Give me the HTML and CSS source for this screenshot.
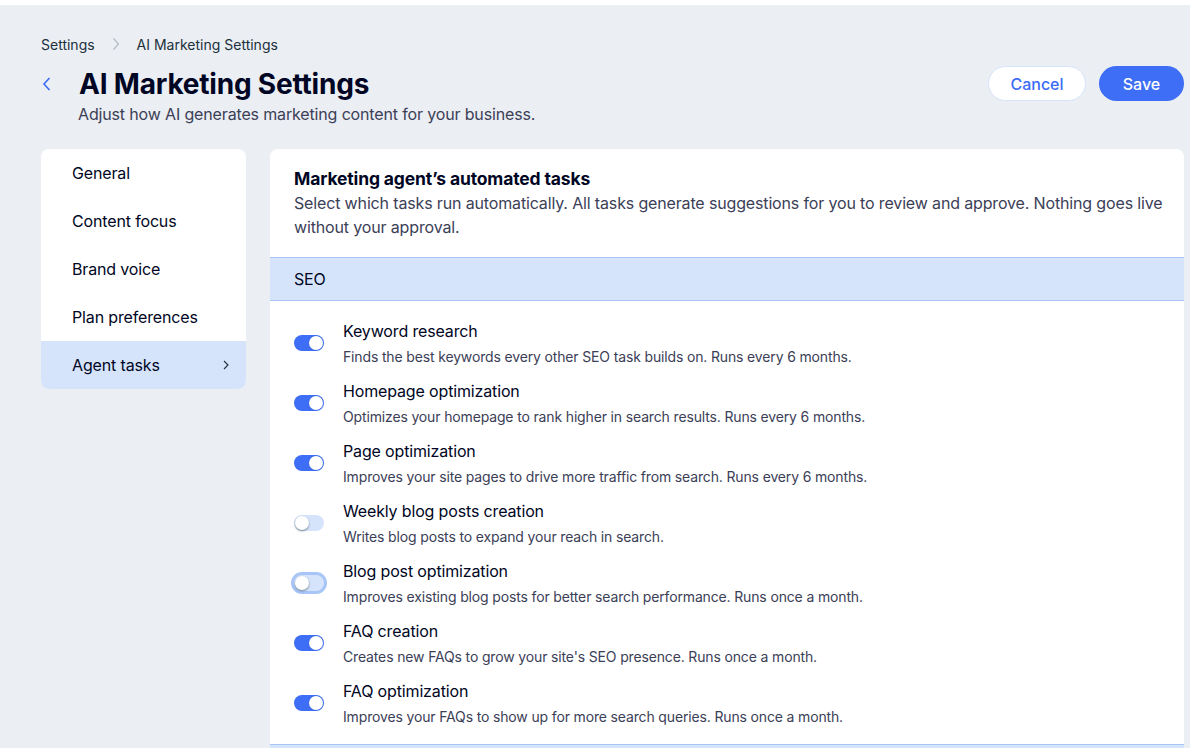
FILE: index.html
```html
<!DOCTYPE html>
<html lang="en">
<head>
  <meta charset="UTF-8">
  <meta name="viewport" content="width=device-width, initial-scale=1.0">
  <title>AI Marketing Settings</title>
  <link rel="stylesheet" href="styles.css">
</head>
<body>
  <div class="topstrip"></div>
  <div class="page">
    <div class="breadcrumb">
      <span>Settings</span>
      <svg class="crumb-sep" width="8" height="14" viewBox="0 0 8 14"><path d="M1.5 1.5 L6.5 7 L1.5 12.5" fill="none" stroke="#b6bac6" stroke-width="1.2"/></svg>
      <span>AI Marketing Settings</span>
    </div>

    <div class="header">
      <div class="title-block">
        <div class="title-row">
          <svg class="back" width="10" height="16" viewBox="0 0 10 16"><path d="M7.5 2 L2 8 L7.5 14" fill="none" stroke="#3b6cf6" stroke-width="1.6"/></svg>
          <h1>AI Marketing Settings</h1>
        </div>
        <p class="subtitle">Adjust how AI generates marketing content for your business.</p>
      </div>
      <div class="actions">
        <button class="btn btn-secondary">Cancel</button>
        <button class="btn btn-primary">Save</button>
      </div>
    </div>

    <div class="layout">
      <nav class="sidebar">
        <div class="nav-item">General</div>
        <div class="nav-item">Content focus</div>
        <div class="nav-item">Brand voice</div>
        <div class="nav-item">Plan preferences</div>
        <div class="nav-item active">Agent tasks
          <svg width="6" height="10" viewBox="0 0 6 10"><path d="M1 1 L5 5 L1 9" fill="none" stroke="#20303c" stroke-width="1.1"/></svg>
        </div>
      </nav>

      <main class="card">
        <div class="card-head">
          <h2>Marketing agent’s automated tasks</h2>
          <p>Select which tasks run automatically. All tasks generate suggestions for you to review and approve. Nothing goes live without your approval.</p>
        </div>

        <div class="section-band">SEO</div>
        <div class="task-list">
          <div class="task">
            <span class="toggle on"></span>
            <div class="task-text">
              <div class="task-title">Keyword research</div>
              <div class="task-desc">Finds the best keywords every other SEO task builds on. Runs every 6 months.</div>
            </div>
          </div>
          <div class="task">
            <span class="toggle on"></span>
            <div class="task-text">
              <div class="task-title">Homepage optimization</div>
              <div class="task-desc">Optimizes your homepage to rank higher in search results. Runs every 6 months.</div>
            </div>
          </div>
          <div class="task">
            <span class="toggle on"></span>
            <div class="task-text">
              <div class="task-title">Page optimization</div>
              <div class="task-desc">Improves your site pages to drive more traffic from search. Runs every 6 months.</div>
            </div>
          </div>
          <div class="task">
            <span class="toggle"></span>
            <div class="task-text">
              <div class="task-title">Weekly blog posts creation</div>
              <div class="task-desc">Writes blog posts to expand your reach in search.</div>
            </div>
          </div>
          <div class="task">
            <span class="toggle focus"></span>
            <div class="task-text">
              <div class="task-title">Blog post optimization</div>
              <div class="task-desc">Improves existing blog posts for better search performance. Runs once a month.</div>
            </div>
          </div>
          <div class="task">
            <span class="toggle on"></span>
            <div class="task-text">
              <div class="task-title">FAQ creation</div>
              <div class="task-desc">Creates new FAQs to grow your site's SEO presence. Runs once a month.</div>
            </div>
          </div>
          <div class="task">
            <span class="toggle on"></span>
            <div class="task-text">
              <div class="task-title">FAQ optimization</div>
              <div class="task-desc">Improves your FAQs to show up for more search queries. Runs once a month.</div>
            </div>
          </div>
        </div>

        <div class="section-band"></div>
      </main>
    </div>
  </div>
</body>
</html>
```

FILE: styles.css
```css
body {
  margin: 0;
  font-family: Inter, "Noto Sans", sans-serif;
  letter-spacing: -0.15px;
  background: #ebeef3;
  color: #000624;
  overflow: hidden;
}
.topstrip {
  height: 5px;
  background: #fff;
}
.page {
  padding: 0 6px 0 41px;
}

.breadcrumb {
  display: flex;
  align-items: center;
  gap: 17px;
  height: 20px;
  margin-top: 29px;
  font-size: 14px;
  letter-spacing: 0;
  color: #20303c;
}

.header {
  display: flex;
  justify-content: space-between;
  align-items: flex-start;
  margin-top: 12px;
}
.title-row {
  display: flex;
  align-items: center;
  gap: 27px;
}
.back {
  margin-left: 1px;
}
h1 {
  margin: 0;
  font-size: 28px;
  font-weight: 700;
  line-height: 36px;
  letter-spacing: -0.2px;
}
.subtitle {
  margin: 0 0 0 37px;
  font-size: 16px;
  line-height: 24px;
  color: #3b4057;
}
.actions {
  display: flex;
  gap: 13px;
}
.btn {
  height: 35px;
  border-radius: 18px;
  font-family: inherit;
  font-size: 16px;
  font-weight: 500;
  cursor: pointer;
}
.btn-secondary {
  width: 98px;
  background: #fff;
  border: 1px solid #d6e4fb;
  color: #3b6cf6;
}
.btn-primary {
  width: 85px;
  background: #3d6ef5;
  border: none;
  color: #fff;
}

.layout {
  display: flex;
  gap: 24px;
  margin-top: 23px;
  align-items: flex-start;
}
.sidebar {
  width: 205px;
  background: #fff;
  border-radius: 8px;
  overflow: hidden;
  flex-shrink: 0;
}
.nav-item {
  height: 48px;
  display: flex;
  align-items: center;
  justify-content: space-between;
  padding: 0 17px 0 31px;
  font-size: 16px;
  color: #000624;
}
.nav-item.active {
  background: #d6e4fb;
}

.card {
  flex: 1;
  background: #fff;
  border-radius: 8px 8px 0 0;
  min-height: 620px;
}
.card-head {
  padding: 18px 20px 18px 24px;
}
.card-head h2 {
  margin: 0;
  font-size: 17.5px;
  font-weight: 700;
  line-height: 24px;
}
.card-head p {
  margin: 0;
  font-size: 16px;
  line-height: 24px;
  color: #3b4057;
}
.section-band {
  height: 42px;
  display: flex;
  align-items: center;
  padding-left: 24px;
  background: #d6e4fb;
  border-top: 1px solid #a8c5f7;
  border-bottom: 1px solid #a8c5f7;
  font-size: 16px;
}
.task-list {
  display: flex;
  flex-direction: column;
  gap: 12px;
  padding: 18px 0 17px 24px;
}
.task {
  display: flex;
  align-items: center;
  gap: 19px;
}
.task-title {
  font-size: 16px;
  line-height: 24px;
}
.task-desc {
  margin-top: 4px;
  font-size: 14px;
  line-height: 20px;
  color: #3b4057;
}

.toggle {
  position: relative;
  width: 30px;
  height: 16px;
  border-radius: 8px;
  background: #d6e4fb;
  flex-shrink: 0;
}
.toggle::after {
  content: "";
  position: absolute;
  top: 1px;
  left: 1px;
  width: 14px;
  height: 14px;
  border-radius: 50%;
  background: #fff;
  box-shadow: 0 1px 2px rgba(22, 45, 61, 0.55);
}
.toggle.on {
  background: #3d6ef5;
}
.toggle.on::after {
  left: 15px;
  box-shadow: 0 0 1px rgba(22, 45, 61, 0.4);
}
.toggle.focus {
  box-shadow: 0 0 0 3px #a8c5f7;
}
```
